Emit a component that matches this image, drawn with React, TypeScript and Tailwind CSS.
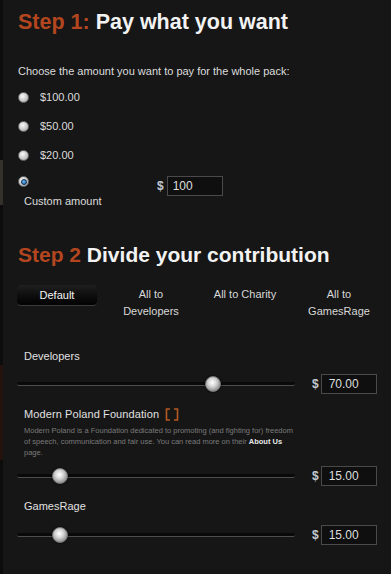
import React from 'react';

const font = "font-['Liberation_Sans',Arial,sans-serif]";

const Radio: React.FC<{ checked?: boolean }> = ({ checked }) => (
    <span className="flex h-[11px] w-[11px] shrink-0 items-center justify-center rounded-full border border-[#6d6d6d] bg-[radial-gradient(circle_at_40%_35%,#fafafa,#c4c4c4_60%,#929292)]">
        {checked && <span className="h-[6px] w-[6px] rounded-full border border-[#0b2f4f] bg-[radial-gradient(circle_at_40%_35%,#6cb6ee,#1c64a6)]" />}
    </span>
);

const MoneyInput: React.FC<{ value: string; className?: string }> = ({ value, className }) => (
    <div className={`flex h-[20px] w-[56px] items-center border border-[#4a4a4a] bg-[#0f0f0f] text-[12px] text-[#dedede] ${className ?? ''}`}>
        {value}
    </div>
);

const Slider: React.FC<{ value: number }> = ({ value }) => (
    <div className="flex items-center">
        <div className="relative -ml-[1px] h-[4px] w-[278px] rounded-full border-b border-[#4d4d4d] bg-[#090909]">
            <span
                className="absolute top-1/2 h-[16px] w-[16px] -translate-y-1/2 rounded-full border border-[#777] bg-[radial-gradient(circle_at_45%_40%,#ffffff,#d6d6d6_35%,#8c8c8c_75%,#5e5e5e)] shadow-[0_0_2px_#000]"
                style={{ left: `calc(${value}% - 7px)` }}
            />
        </div>
        <span className="ml-[17px] text-[12px] font-bold text-[#c3cad2]">$</span>
        <MoneyInput value={value.toFixed(2)} className="ml-[2px] pl-[7px]" />
    </div>
);

export default function App() {
    const amounts = ['$100.00', '$50.00', '$20.00'];
    const tabs = [['All to', 'Developers'], ['All to Charity'], ['All to', 'GamesRage']];

    return (
        <div className={`flex min-h-[574px] bg-[#161616] ${font}`}>
            {/* left edge of page behind */}
            <div className="flex w-[3px] shrink-0 flex-col bg-[#0c0c0c]">
                <div className="h-[160px]" />
                <div className="h-[45px] bg-[#34302c]" />
                <div className="h-[160px]" />
                <div className="h-[95px] bg-[#24120d]" />
            </div>

            <div className="flex-1 pl-[15px] pr-[15px]">
                {/* Step 1 */}
                <h2 className="mt-[11px] text-[21.5px] leading-[22px] font-bold text-[#f2f2f2]">
                    <span className="text-[#b4461f]">Step 1:</span> Pay what you want
                </h2>
                <p className="mt-[31px] text-[11px] leading-[14px] text-[#dcdcdc]">
                    Choose the amount you want to pay for the whole pack:
                </p>

                <div className="mt-[5px]">
                    {amounts.map((a) => (
                        <div key={a} className="flex h-[29px] items-center">
                            <Radio />
                            <span className="ml-[11px] text-[11px] text-[#dcdcdc]">{a}</span>
                        </div>
                    ))}
                    <div className="mt-[6px] flex">
                        <div className="flex w-[139px] flex-col">
                            <Radio checked />
                            <span className="mt-[7px] ml-[6px] text-[11px] leading-[14px] text-[#dcdcdc]">Custom amount</span>
                        </div>
                        <div className="flex h-[20px] items-center">
                            <span className="text-[12px] font-bold text-[#c3cad2]">$</span>
                            <MoneyInput value="100" className="ml-[3px] pl-[5px]" />
                        </div>
                    </div>
                </div>

                {/* Step 2 */}
                <h2 className="mt-[36px] text-[21px] leading-[22px] font-bold text-[#f2f2f2]">
                    <span className="text-[#b4461f]">Step 2</span> Divide your contribution
                </h2>

                <div className="-ml-[8px] mt-[19px] grid grid-cols-[94px_94px_94px_94px] text-[11px] leading-[17px] text-[#d8d8d8]">
                    <div className="flex justify-center">
                        <div className="flex h-[21px] w-[80px] items-center justify-center rounded-[4px] border-b border-[#3c3c3c] bg-gradient-to-b from-[#1f1f1f] to-[#030303] text-[#f4f4f4]">
                            Default
                        </div>
                    </div>
                    {tabs.map((t) => (
                        <div key={t.join()} className="flex flex-col items-center pt-[1px] text-center">
                            {t.map((line) => (
                                <span key={line}>{line}</span>
                            ))}
                        </div>
                    ))}
                </div>

                <div className="mt-[29px] pl-[6px] text-[11px] leading-[14px] text-[#e0e0e0]">Developers</div>
                <div className="mt-[11px]">
                    <Slider value={70} />
                </div>

                <div className="mt-[13px] flex items-center pl-[6px] text-[11px] leading-[14px] tracking-[0.1px] text-[#e0e0e0]">
                    Modern Poland Foundation
                    <svg className="ml-[6px]" width="14" height="13" viewBox="0 0 14 13" fill="none" stroke="#b55a22" strokeWidth="1.6">
                        <path d="M5 1H1.5V12H5" />
                        <path d="M9 1H12.5V12H9" />
                    </svg>
                </div>
                <p className="mt-[4px] w-[280px] pl-[6px] text-[7.5px] leading-[11px] text-[#7a7a7a]">
                    Modern Poland is a Foundation dedicated to promoting (and fighting for) freedom of speech, communication and fair use. You can read more on their{' '}
                    <span className="font-bold text-[#e8e8e8]">About Us</span> page.
                </p>
                <div className="mt-[8px]">
                    <Slider value={15} />
                </div>

                <div className="mt-[13px] pl-[6px] text-[11px] leading-[14px] text-[#e0e0e0]">GamesRage</div>
                <div className="mt-[12px]">
                    <Slider value={15} />
                </div>
            </div>
        </div>
    );
}
